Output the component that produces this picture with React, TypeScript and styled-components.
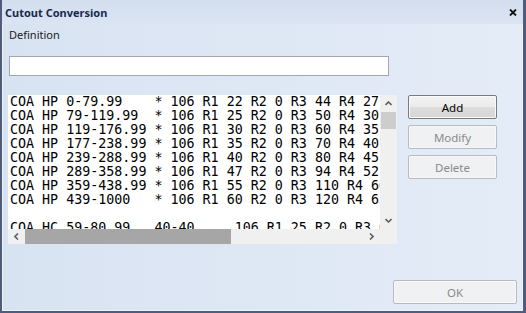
import * as React from "react";
import styled, { createGlobalStyle } from "styled-components";

const Global = createGlobalStyle`
  html, body { margin: 0; padding: 0; background: #4f5c7e; }
`;

const Window = styled.div`
  width: 526px;
  height: 313px;
  box-sizing: border-box;
  border: solid #4f5c7e;
  border-width: 0 3px 2px 2px;
  background: linear-gradient(90deg, #d8e3f2 0%, #e4ecf7 100%);
  box-shadow: inset 1px 0 #eef3fa, inset -1px 0 #eef3fa, inset 0 -1px #eef3fa;
  display: flex;
  flex-direction: column;
  font-family: "Noto Sans", "Liberation Sans", sans-serif;
  font-size: 11px;
  color: #1b1b1b;
`;

const TitleBar = styled.div`
  height: 24px;
  flex: none;
  display: flex;
  align-items: center;
  justify-content: space-between;
  padding: 0 6px 0 3px;
  background: linear-gradient(180deg, #d3deef 0%, #dae4f3 100%);
  .title {
    font-weight: 700;
    font-size: 11px;
    color: #172a4c;
  }
`;

const Body = styled.div`
  flex: 1;
  display: flex;
  flex-direction: column;
  padding: 0 6px 0 6px;
`;

const Label = styled.div`
  margin: 4px 0 0 1px;
  line-height: 14px;
  height: 14px;
  font-size: 11px;
`;

const TextInput = styled.input`
  margin: 14px 0 0 1px;
  width: 380px;
  height: 20px;
  box-sizing: border-box;
  border: 1px solid #a3a7ad;
  background: #fff;
  outline: none;
  padding: 0 3px;
`;

const Row = styled.div`
  margin-top: 19px;
  display: flex;
  align-items: flex-start;
`;

const ListBox = styled.div`
  width: 389px;
  height: 149px;
  display: grid;
  grid-template-columns: 372px 17px;
  grid-template-rows: 134px 15px;
  background: #fff;
`;

const ListText = styled.div`
  overflow: hidden;
  padding: 0 0 0 2px;
  font-family: "DejaVu Sans Mono", "Liberation Mono", monospace;
  font-size: 13.33px;
  line-height: 14px;
  white-space: pre;
  color: #000;
`;

const VScroll = styled.div`
  background: #f0f0f0;
  display: flex;
  flex-direction: column;
`;

const HScroll = styled.div`
  background: #f0f0f0;
  display: flex;
`;

const Corner = styled.div`
  background: #f0f0f0;
`;

const ArrowBtn = styled.div`
  flex: none;
  width: 17px;
  height: 17px;
  display: flex;
  align-items: center;
  justify-content: center;
  &.h {
    height: 15px;
  }
`;

const Thumb = styled.div<{ $dark?: boolean }>`
  flex: none;
  background: ${(p) => (p.$dark ? "#a6a6a6" : "#cdcdcd")};
`;

const Spacer = styled.div`
  flex: 1;
`;

const ButtonCol = styled.div`
  margin-left: 11px;
  display: flex;
  flex-direction: column;
  gap: 6px;
`;

const Button = styled.button<{ $disabled?: boolean; $width?: number }>`
  width: ${(p) => p.$width ?? 89}px;
  height: 24px;
  box-sizing: border-box;
  padding: 0;
  font-family: "Noto Sans", "Liberation Sans", sans-serif;
  font-size: 11.5px;
  border-radius: 2px;
  border: 1px solid ${(p) => (p.$disabled ? "#b7bcc2" : "#7a7a7a")};
  color: ${(p) => (p.$disabled ? "#8a8a8a" : "#000")};
  background: ${(p) =>
    p.$disabled ? "#f0f1f2" : "linear-gradient(180deg, #f2f2f2 0%, #ebebeb 50%, #dddddd 51%, #d6d6d6 100%)"};
  box-shadow: inset 0 0 0 1px ${(p) => (p.$disabled ? "#f7f7f7" : "#fafafa")};
`;

const Footer = styled.div`
  margin-top: 36px;
  display: flex;
  justify-content: flex-end;
`;

const Chevron = ({ dir }: { dir: "up" | "down" | "left" | "right" }) => {
  const pts = {
    up: "0.5,4 3.5,1 6.5,4",
    down: "0.5,1 3.5,4 6.5,1",
    left: "4,0.5 1,3.5 4,6.5",
    right: "1,0.5 4,3.5 1,6.5",
  }[dir];
  const vertical = dir === "up" || dir === "down";
  return (
    <svg width={vertical ? 7 : 5} height={vertical ? 5 : 7} viewBox={vertical ? "0 0 7 5" : "0 0 5 7"}>
      <polyline points={pts} fill="none" stroke="#606060" strokeWidth="1.6" />
    </svg>
  );
};

const lines = [
  "COA HP 0-79.99    * 106 R1 22 R2 0 R3 44 R4 27-30",
  "COA HP 79-119.99  * 106 R1 25 R2 0 R3 50 R4 30-35",
  "COA HP 119-176.99 * 106 R1 30 R2 0 R3 60 R4 35-40",
  "COA HP 177-238.99 * 106 R1 35 R2 0 R3 70 R4 40-45",
  "COA HP 239-288.99 * 106 R1 40 R2 0 R3 80 R4 45-50",
  "COA HP 289-358.99 * 106 R1 47 R2 0 R3 94 R4 52-57",
  "COA HP 359-438.99 * 106 R1 55 R2 0 R3 110 R4 60-65",
  "COA HP 439-1000   * 106 R1 60 R2 0 R3 120 R4 65-70",
  "",
  "COA HC 59-80.99   40-40     106 R1 25 R2 0 R3 0 R4 0",
];

export default function App() {
  return (
    <>
      <Global />
      <Window>
        <TitleBar>
          <span className="title">Cutout Conversion</span>
          <svg width="8" height="7" viewBox="0 0 8 7">
            <path d="M1 0.5 L7 6.5 M7 0.5 L1 6.5" stroke="#111" strokeWidth="1.8" />
          </svg>
        </TitleBar>
        <Body>
          <Label>Definition</Label>
          <TextInput defaultValue="" />
          <Row>
            <ListBox>
              <ListText>{lines.join("\n")}</ListText>
              <VScroll>
                <ArrowBtn>
                  <Chevron dir="up" />
                </ArrowBtn>
                <Thumb style={{ height: 17, margin: "0 1px" }} />
                <Spacer />
                <ArrowBtn>
                  <Chevron dir="down" />
                </ArrowBtn>
              </VScroll>
              <HScroll>
                <ArrowBtn className="h">
                  <Chevron dir="left" />
                </ArrowBtn>
                <Thumb $dark style={{ width: 206 }} />
                <Spacer />
                <ArrowBtn className="h">
                  <Chevron dir="right" />
                </ArrowBtn>
              </HScroll>
              <Corner />
            </ListBox>
            <ButtonCol>
              <Button>Add</Button>
              <Button $disabled>Modify</Button>
              <Button $disabled>Delete</Button>
            </ButtonCol>
          </Row>
          <Footer>
            <Button $disabled $width={124}>
              OK
            </Button>
          </Footer>
        </Body>
      </Window>
    </>
  );
}
